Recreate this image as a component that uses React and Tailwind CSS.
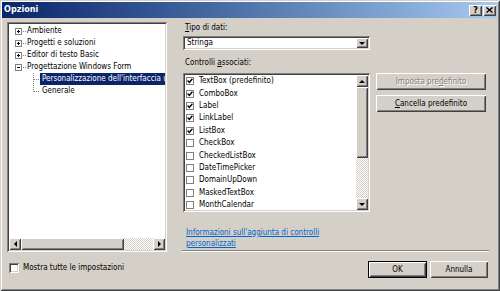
const font = "font-['DejaVu_Sans_Condensed','DejaVu_Sans',sans-serif]";
const frame =
  'shadow-[inset_1px_1px_0_#d4d0c8,inset_-1px_-1px_0_#404040,inset_2px_2px_0_#ffffff,inset_-2px_-2px_0_#808080]';
const raised =
  'shadow-[inset_1px_1px_0_#ffffff,inset_-1px_-1px_0_#404040,inset_2px_2px_0_#d4d0c8,inset_-2px_-2px_0_#808080]';
const sunken =
  'shadow-[inset_1px_1px_0_#808080,inset_-1px_-1px_0_#ffffff,inset_2px_2px_0_#404040,inset_-2px_-2px_0_#d4d0c8]';
const dither =
  'bg-[repeating-conic-gradient(#ffffff_0_25%,#d4d0c8_0_50%)] bg-[length:2px_2px]';

function Arrow({ dir }) {
  const pts = {
    up: '1,4 4,1 7,4',
    down: '1,1 7,1 4,4',
    left: '4,1 1,4 4,7',
    right: '1,1 4,4 1,7',
  }[dir];
  const vertical = dir === 'up' || dir === 'down';
  return (
    <svg width={vertical ? 8 : 5} height={vertical ? 5 : 8} viewBox={vertical ? '0 0 8 5' : '0 0 5 8'}>
      <polygon points={pts} fill="#000" />
    </svg>
  );
}

function ArrowButton({ dir, className = '' }) {
  return (
    <div className={`bg-[#d4d0c8] ${raised} flex items-center justify-center shrink-0 ${className}`}>
      <Arrow dir={dir} />
    </div>
  );
}

function Expander({ open }) {
  return (
    <svg width="7" height="7" viewBox="0 0 7 7" shapeRendering="crispEdges" className="shrink-0">
      <rect x="0.5" y="0.5" width="6" height="6" fill="#fff" stroke="#808080" />
      <line x1="2" y1="3.5" x2="5" y2="3.5" stroke="#000" />
      {!open && <line x1="3.5" y1="2" x2="3.5" y2="5" stroke="#000" />}
    </svg>
  );
}

function ChildLines({ last }) {
  return (
    <svg width="11" height="12" viewBox="0 0 11 12" shapeRendering="crispEdges" className="shrink-0">
      <line x1="4.5" y1="0" x2="4.5" y2={last ? 6.5 : 12} stroke="#808080" strokeDasharray="1 1" />
      <line x1="5" y1="6.5" x2="11" y2="6.5" stroke="#808080" strokeDasharray="1 1" />
    </svg>
  );
}

const treeItems = [
  { label: 'Ambiente' },
  { label: 'Progetti e soluzioni' },
  { label: 'Editor di testo Basic' },
  { label: 'Progettazione Windows Form', open: true },
  { label: "Personalizzazione dell'interfaccia utente", child: true, selected: true },
  { label: 'Generale', child: true, last: true },
];

const controls = [
  ['TextBox (predefinito)', true],
  ['ComboBox', true],
  ['Label', true],
  ['LinkLabel', true],
  ['ListBox', true],
  ['CheckBox', false],
  ['CheckedListBox', false],
  ['DateTimePicker', false],
  ['DomainUpDown', false],
  ['MaskedTextBox', false],
  ['MonthCalendar', false],
];

function Tree() {
  return (
    <div className={`w-[160px] h-[230px] bg-white ${sunken} p-[2px] flex flex-col`}>
      <div className="flex-1 pt-[1px] overflow-hidden">
        {treeItems.map((item) =>
          item.child ? (
            <div key={item.label} className="h-[12px] flex items-center whitespace-nowrap">
              <div className="w-[20px] shrink-0" />
              <ChildLines last={item.last} />
              <span
                className={`shrink-0 h-[12px] leading-[12px] px-[2px] ${
                  item.selected ? 'bg-[#0a246a] text-white' : ''
                }`}
              >
                {item.label}
              </span>
            </div>
          ) : (
            <div key={item.label} className="h-[12px] flex items-center whitespace-nowrap">
              <div className="w-[6px] shrink-0" />
              <Expander open={item.open} />
              <div className="w-[3px] ml-[1px] shrink-0 border-t border-dotted border-[#808080]" />
              <span className="ml-[1px] leading-[12px]">{item.label}</span>
            </div>
          )
        )}
      </div>
      <div className="h-[12px] flex">
        <ArrowButton dir="left" className="w-[12px]" />
        <div className={`w-[103px] bg-[#d4d0c8] ${raised}`} />
        <div className={`flex-1 ${dither}`} />
        <ArrowButton dir="right" className="w-[12px]" />
      </div>
    </div>
  );
}

function Check({ checked, size = 'w-[8px] h-[8px]' }) {
  return (
    <div className={`${size} bg-white border border-[#808080] flex items-center justify-center shrink-0`}>
      {checked && (
        <svg width="6" height="6" viewBox="0 0 6 6">
          <path d="M0.6 2.6 L2.3 4.4 L5.4 0.8" fill="none" stroke="#000" strokeWidth="1.4" />
        </svg>
      )}
    </div>
  );
}

function Button({ children, disabled, isDefault, className = '' }) {
  return (
    <div
      className={`h-[17px] flex items-center justify-center bg-[#d4d0c8] ${
        isDefault ? 'border border-black' : ''
      } ${className}`}
    >
      <div
        className={`w-full h-full flex items-center justify-center ${raised} ${
          disabled ? 'text-[#808080] [text-shadow:1px_1px_0_#ffffff]' : ''
        }`}
      >
        {children}
      </div>
    </div>
  );
}

export default function App() {
  return (
    <div
      className={`w-[500px] h-[291px] bg-[#d4d0c8] ${frame} pt-[2px] pl-[2px] pr-[3px] flex flex-col ${font} text-[8px] text-black overflow-hidden`}
    >
      <div className="h-[16px] shrink-0 bg-gradient-to-r from-[#0a246a] to-[#a6caf0] flex items-center pl-[2px]">
        <span className="text-white font-bold text-[9px] flex-1">Opzioni</span>
        <div className={`w-[13px] h-[11px] bg-[#d4d0c8] ${raised} flex items-center justify-center font-bold text-[9px] leading-none`}>
          ?
        </div>
        <div className={`w-[13px] h-[11px] ml-[1px] mr-[1px] bg-[#d4d0c8] ${raised} flex items-center justify-center`}>
          <svg width="7" height="6" viewBox="0 0 7 6">
            <path d="M0.5 0.5 L6.5 5.5 M6.5 0.5 L0.5 5.5" stroke="#000" strokeWidth="1.4" />
          </svg>
        </div>
      </div>

      <div className="flex mt-[4px] ml-[5px]">
        <Tree />
        <div className="ml-[16px] w-[306px] flex flex-col">
          <div className="h-[10px] mt-[1px] leading-[10px] pl-[2px]">
            <span className="underline underline-offset-[1px]">T</span>ipo di dati:
          </div>
          <div className={`mt-[3px] w-[187px] h-[14px] bg-white ${sunken} p-[2px] flex items-center`}>
            <span className="flex-1 pl-[2px] leading-[10px]">Stringa</span>
            <ArrowButton dir="down" className="w-[12px] h-[10px]" />
          </div>
          <div className="h-[10px] mt-[8px] leading-[10px] pl-[2px]">
            Controlli <span className="underline underline-offset-[1px]">a</span>ssociati:
          </div>
          <div className="mt-[5px] flex items-start">
            <div className={`w-[187px] h-[139px] bg-white ${sunken} p-[2px] flex`}>
              <div className="flex-1 overflow-hidden">
                {controls.map(([label, checked]) => (
                  <div key={label} className="h-[12.4px] flex items-center pl-[1px] whitespace-nowrap">
                    <Check checked={checked} />
                    <span className="ml-[5px]">{label}</span>
                  </div>
                ))}
              </div>
              <div className="w-[12px] flex flex-col">
                <ArrowButton dir="up" className="h-[12px]" />
                <div className={`h-[71px] bg-[#d4d0c8] ${raised}`} />
                <div className={`flex-1 ${dither}`} />
                <ArrowButton dir="down" className="h-[12px]" />
              </div>
            </div>
            <div className="ml-[6px] w-[110px] flex flex-col gap-[5px]">
              <Button disabled>
                Imposta pre<span className="underline underline-offset-[1px]">d</span>efinito
              </Button>
              <Button>
                <span className="underline underline-offset-[1px]">C</span>ancella predefinito
              </Button>
            </div>
          </div>
          <div className="mt-[15px] pl-[3px] text-[#0066cc] underline underline-offset-[1px] leading-[11px]">
            Informazioni sull'aggiunta di controlli
            <br />
            personalizzati
          </div>
          <div className="mt-[1px] -ml-[1px] h-[2px] border-t border-[#808080] border-b border-b-white" />
        </div>
      </div>

      <div className="mt-[9px] flex items-start">
        <div className="ml-[7px] mt-[2px] flex items-center">
          <div className={`w-[10px] h-[10px] bg-white ${sunken}`} />
          <span className="ml-[4px] leading-[10px]">Mostra tutte le impostazioni</span>
        </div>
        <div className="flex-1" />
        <Button isDefault className="w-[59px]">
          OK
        </Button>
        <Button className="w-[58px] ml-[3px] mr-[9px]">Annulla</Button>
      </div>
    </div>
  );
}
